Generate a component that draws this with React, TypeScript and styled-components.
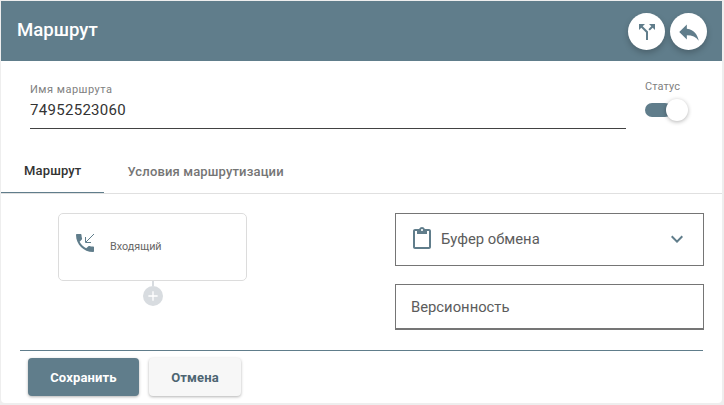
import React from 'react';
import styled, { createGlobalStyle } from 'styled-components';
import { MdAdd, MdCallSplit, MdContentPaste, MdExpandMore, MdReply } from 'react-icons/md';

const slate = '#607d8b';

const GlobalStyle = createGlobalStyle`
  html, body {
    margin: 0;
    padding: 0;
    background: #eeeeee;
    font-family: Roboto, "Liberation Sans", sans-serif;
  }
`;

const Card = styled.div`
  box-sizing: border-box;
  width: 721px;
  height: 402px;
  margin: 1px 0 0 1px;
  background: #fff;
  display: flex;
  flex-direction: column;
  border-radius: 0 0 4px 4px;
  overflow: hidden;
`;

const Header = styled.header`
  flex: none;
  height: 60px;
  box-sizing: border-box;
  padding: 0 15px 0 16px;
  background: ${slate};
  display: flex;
  align-items: center;
  justify-content: space-between;
`;

const Title = styled.h1`
  margin: 0 0 2px;
  color: #fff;
  font-size: 18.6px;
  font-weight: 500;
`;

const HeaderActions = styled.div`
  display: flex;
  gap: 5px;
  margin-top: 1px;
`;

const RoundButton = styled.button`
  width: 37px;
  height: 37px;
  padding: 0;
  border: none;
  border-radius: 50%;
  background: #fff;
  color: ${slate};
  display: flex;
  align-items: center;
  justify-content: center;
  box-shadow: 0 3px 6px rgba(0, 0, 0, 0.22);
`;

const FormRow = styled.div`
  flex: none;
  height: 94px;
  box-sizing: border-box;
  padding: 22px 0 0 29px;
  display: flex;
  gap: 19px;
`;

const NameField = styled.div`
  width: 596px;
  height: 46px;
  box-sizing: border-box;
  border-bottom: 1px solid #424242;
  display: flex;
  flex-direction: column;
`;

const SmallLabel = styled.label`
  color: #808080;
  font-size: 11px;
  line-height: 14px;
  letter-spacing: 0.5px;
`;

const StatusLabel = styled(SmallLabel)`
  letter-spacing: 0.1px;
`;

const NameValue = styled.div`
  margin-top: 3px;
  color: #333;
  font-size: 15px;
  line-height: 20px;
  letter-spacing: 0.3px;
`;

const StatusField = styled.div`
  display: flex;
  flex-direction: column;
  margin-top: -3px;
`;

const Toggle = styled.div`
  position: relative;
  width: 27px;
  height: 14px;
  margin-top: 9px;
  border-radius: 7px;
  background: ${slate};
`;

const ToggleThumb = styled.span`
  position: absolute;
  left: 21px;
  top: -4px;
  width: 22px;
  height: 22px;
  border-radius: 50%;
  background: #fff;
  box-shadow: 0 1px 4px rgba(0, 0, 0, 0.3);
`;

const Tabs = styled.nav`
  flex: none;
  height: 39px;
  box-sizing: border-box;
  border-bottom: 1px solid #e0e0e0;
  display: flex;
`;

const Tab = styled.div<{ $active?: boolean }>`
  height: 38px;
  box-sizing: border-box;
  padding: 0 23px 6px;
  display: flex;
  align-items: center;
  font-size: 13px;
  font-weight: 500;
  letter-spacing: 0.15px;
  color: ${(p) => (p.$active ? '#333' : '#757575')};
  border-bottom: ${(p) => (p.$active ? `1px solid ${slate}` : 'none')};
`;

const Body = styled.div`
  flex: none;
  height: 156px;
  box-sizing: border-box;
  padding: 19px 18px 0 57px;
  display: flex;
  justify-content: space-between;
`;

const FlowColumn = styled.div`
  display: flex;
  flex-direction: column;
  align-items: center;
`;

const NodeCard = styled.div`
  width: 189px;
  height: 68px;
  box-sizing: border-box;
  padding: 17px 0 0 14px;
  border: 1px solid #dcdcdc;
  border-radius: 5px;
  display: flex;
  align-items: flex-start;
  gap: 13px;
`;

const NodeLabel = styled.span`
  margin-top: 9px;
  color: #666;
  font-size: 10.8px;
  line-height: 14px;
`;

const Connector = styled.div`
  width: 2px;
  height: 5px;
  background: #d8dce0;
`;

const AddNode = styled.div`
  width: 20px;
  height: 20px;
  border-radius: 50%;
  background: #d8dce0;
  color: #fff;
  display: flex;
  align-items: center;
  justify-content: center;
`;

const SideColumn = styled.div`
  width: 309px;
  display: flex;
  flex-direction: column;
  gap: 18px;
`;

const SelectBox = styled.div`
  height: 53px;
  box-sizing: border-box;
  padding: 0 14px 2px 14px;
  border: 1px solid #757575;
  display: flex;
  align-items: center;
  color: #5c5c5c;
  font-size: 14.8px;
`;

const SelectText = styled.span`
  flex: 1;
  margin-left: 7px;
`;

const VersionBox = styled.div`
  height: 46px;
  box-sizing: border-box;
  padding: 0 15px;
  border: 1px solid #757575;
  border-bottom-width: 2px;
  display: flex;
  align-items: center;
  color: #5c5c5c;
  font-size: 14.8px;
`;

const Footer = styled.footer`
  margin: 0 19px;
  padding: 7px 0 0 8px;
  border-top: 1px solid ${slate};
  display: flex;
  gap: 10px;
`;

const SaveButton = styled.button`
  width: 111px;
  height: 38px;
  border: none;
  border-radius: 4px;
  background: ${slate};
  color: #fff;
  font-family: inherit;
  font-size: 13px;
  font-weight: 700;
  letter-spacing: 0.15px;
  box-shadow: 0 1px 3px rgba(0, 0, 0, 0.3);
`;

const CancelButton = styled.button`
  width: 92px;
  height: 38px;
  border: none;
  border-radius: 4px;
  background: #f7f7f7;
  color: #4d6572;
  font-family: inherit;
  font-size: 13px;
  font-weight: 700;
  letter-spacing: 0.15px;
  box-shadow: 0 1px 3px rgba(0, 0, 0, 0.3);
`;

const IncomingCallIcon = () => (
  <svg width="24" height="24" viewBox="0 0 24 24">
    <path
      fill={slate}
      d="M20 15.5c-1.25 0-2.45-.2-3.57-.57-.35-.11-.74-.03-1.02.24l-2.2 2.2c-2.83-1.44-5.15-3.75-6.59-6.59l2.2-2.21c.28-.26.36-.65.25-1C8.7 6.45 8.5 5.25 8.5 4c0-.55-.45-1-1-1H4c-.55 0-1 .45-1 1 0 9.39 7.61 17 17 17 .55 0 1-.45 1-1v-3.5c0-.55-.45-1-1-1z"
    />
    <path fill="none" stroke={slate} strokeWidth="1" d="M21 3l-8 8M12.5 6v5.5H18" />
  </svg>
);

export default function App() {
  return (
    <>
      <GlobalStyle />
      <Card>
        <Header>
          <Title>Маршрут</Title>
          <HeaderActions>
            <RoundButton>
              <MdCallSplit size={24} />
            </RoundButton>
            <RoundButton>
              <MdReply size={26} />
            </RoundButton>
          </HeaderActions>
        </Header>
        <FormRow>
          <NameField>
            <SmallLabel>Имя маршрута</SmallLabel>
            <NameValue>74952523060</NameValue>
          </NameField>
          <StatusField>
            <StatusLabel>Статус</StatusLabel>
            <Toggle>
              <ToggleThumb />
            </Toggle>
          </StatusField>
        </FormRow>
        <Tabs>
          <Tab $active>Маршрут</Tab>
          <Tab>Условия маршрутизации</Tab>
        </Tabs>
        <Body>
          <FlowColumn>
            <NodeCard>
              <IncomingCallIcon />
              <NodeLabel>Входящий</NodeLabel>
            </NodeCard>
            <Connector />
            <AddNode>
              <MdAdd size={16} />
            </AddNode>
          </FlowColumn>
          <SideColumn>
            <SelectBox>
              <MdContentPaste size={24} color={slate} />
              <SelectText>Буфер обмена</SelectText>
              <MdExpandMore size={24} color={slate} />
            </SelectBox>
            <VersionBox>Версионность</VersionBox>
          </SideColumn>
        </Body>
        <Footer>
          <SaveButton>Сохранить</SaveButton>
          <CancelButton>Отмена</CancelButton>
        </Footer>
      </Card>
    </>
  );
}
